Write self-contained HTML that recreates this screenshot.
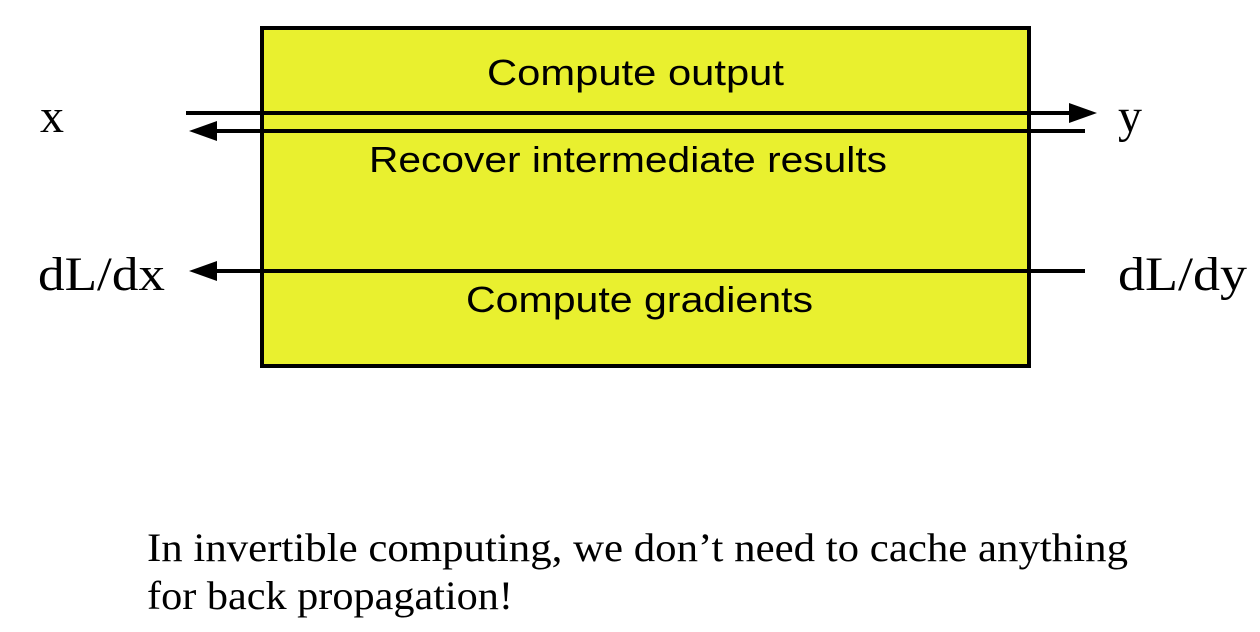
<!DOCTYPE html>
<html><head><meta charset="utf-8"><style>html,body{margin:0;padding:0;background:#fff}svg{display:block}</style></head>
<body>
<svg width="1260" height="632" viewBox="0 0 1260 632" xmlns="http://www.w3.org/2000/svg">
<rect x="262" y="28" width="767" height="338" fill="#e9f02f" stroke="#000" stroke-width="4"/>
<g stroke="#000" stroke-width="4">
<line x1="186" y1="113" x2="1072" y2="113"/>
<line x1="215" y1="131" x2="1085" y2="131"/>
<line x1="215" y1="271" x2="1085" y2="271"/>
</g>
<g fill="#000">
<polygon points="1097,113 1069,103 1069,123"/>
<polygon points="189,131 217,121 217,141"/>
<polygon points="189,271 217,261 217,281"/>
</g>
<g font-family="Liberation Sans, sans-serif" font-size="36" fill="#000">
<text x="487" y="85" textLength="297" lengthAdjust="spacingAndGlyphs">Compute output</text>
<text x="369" y="172" textLength="518" lengthAdjust="spacingAndGlyphs">Recover intermediate results</text>
<text x="466" y="312" textLength="347" lengthAdjust="spacingAndGlyphs">Compute gradients</text>
</g>
<g font-family="Liberation Serif, serif" font-size="48" fill="#000">
<text x="40" y="132">x</text>
<text x="1118" y="132">y</text>
<text x="38" y="290" textLength="127" lengthAdjust="spacingAndGlyphs">dL/dx</text>
<text x="1118" y="290" textLength="129" lengthAdjust="spacingAndGlyphs">dL/dy</text>
</g>
<g font-family="Liberation Serif, serif" font-size="40" fill="#000">
<text x="147" y="561" textLength="981" lengthAdjust="spacingAndGlyphs">In invertible computing, we don’t need to cache anything</text>
<text x="147" y="609" textLength="366" lengthAdjust="spacingAndGlyphs">for back propagation!</text>
</g>
</svg>
</body></html>
